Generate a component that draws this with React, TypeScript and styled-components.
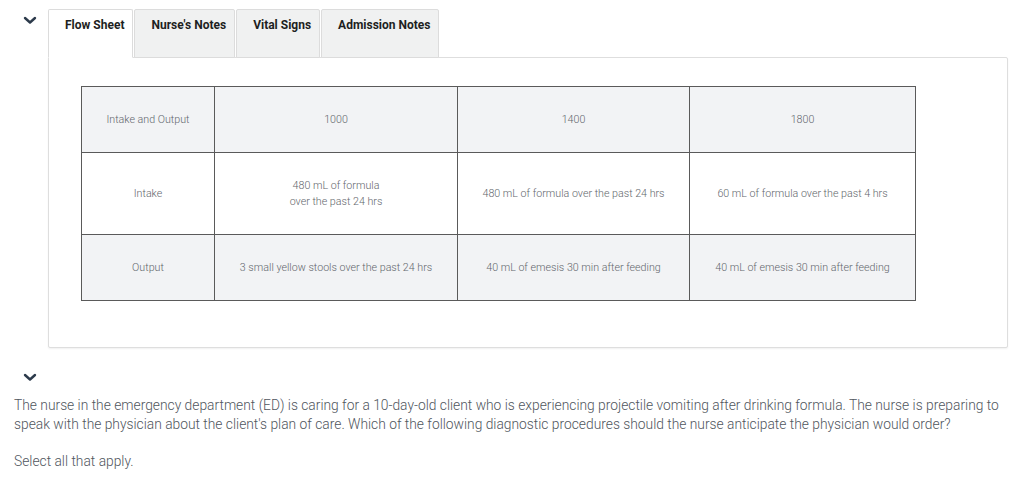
import styled, { createGlobalStyle } from "styled-components";

const GlobalStyle = createGlobalStyle`
  body {
    margin: 0;
    background: #ffffff;
    font-family: Roboto, "Liberation Sans", Arial, sans-serif;
  }
  * { box-sizing: border-box; }
`;

const tabs = ["Flow Sheet", "Nurse's Notes", "Vital Signs", "Admission Notes"];

const rows = [
  {
    shade: true,
    cells: ["Intake and Output", "1000", "1400", "1800"],
  },
  {
    shade: false,
    cells: [
      "Intake",
      "480 mL of formula\nover the past 24 hrs",
      "480 mL of formula over the past 24 hrs",
      "60 mL of formula over the past 4 hrs",
    ],
  },
  {
    shade: true,
    cells: [
      "Output",
      "3 small yellow stools over the past 24 hrs",
      "40 mL of emesis 30 min after feeding",
      "40 mL of emesis 30 min after feeding",
    ],
  },
];

const rowHeights = [66, 82, 66];
const colWidths = [133, 243, 232, 226];

const Chevron = () => (
  <svg width="14" height="9" viewBox="0 0 14 9">
    <polyline
      points="2,2 7,6.5 12,2"
      fill="none"
      stroke="#2c3a4b"
      strokeWidth="2.4"
      strokeLinecap="round"
      strokeLinejoin="round"
    />
  </svg>
);

export default function App() {
  return (
    <>
      <GlobalStyle />
      <Page>
        <Section>
          <Toggle>
            <Chevron />
          </Toggle>
          <TabsArea>
            <TabBar>
              {tabs.map((t, i) => (
                <Tab key={t} active={i === 0}>
                  {t}
                </Tab>
              ))}
            </TabBar>
            <Panel>
              <Table>
                <colgroup>
                  {colWidths.map((w, i) => (
                    <col key={i} style={{ width: w }} />
                  ))}
                </colgroup>
                <tbody>
                  {rows.map((r, ri) => (
                    <Row key={ri} shade={r.shade} style={{ height: rowHeights[ri] }}>
                      {r.cells.map((c, ci) => (
                        <Cell key={ci}>{c}</Cell>
                      ))}
                    </Row>
                  ))}
                </tbody>
              </Table>
            </Panel>
          </TabsArea>
        </Section>

        <SecondToggle>
          <Chevron />
        </SecondToggle>

        <Question>
          The nurse in the emergency department (ED) is caring for a 10-day-old client who is
          experiencing projectile vomiting after drinking formula. The nurse is preparing to speak
          with the physician about the client's plan of care. Which of the following diagnostic
          procedures should the nurse anticipate the physician would order?
        </Question>
        <Instruction>Select all that apply.</Instruction>
      </Page>
    </>
  );
}

const Page = styled.div`
  padding: 9px 14px 0 14px;
  width: 1024px;
`;

const Section = styled.div`
  display: flex;
  align-items: flex-start;
`;

const Toggle = styled.div`
  width: 34px;
  display: flex;
  justify-content: flex-start;
  padding: 7px 0 0 9px;
`;

const TabsArea = styled.div`
  display: flex;
  flex-direction: column;
  width: 960px;
`;

const TabBar = styled.div`
  display: flex;
  align-items: flex-end;
  margin-bottom: -1px;
  position: relative;
  z-index: 1;
`;

const Tab = styled.div<{ active: boolean }>`
  height: 49px;
  padding: 7px 8px 0 16px;
  margin-right: 1px;
  font-size: 12px;
  line-height: 16px;
  font-weight: 700;
  color: #1d1f22;
  background: ${(p) => (p.active ? "#ffffff" : "#f0f1f1")};
  border: 1px solid #dcdcdc;
  border-bottom: ${(p) => (p.active ? "1px solid #ffffff" : "1px solid #dcdcdc")};
  border-radius: 2px 2px 0 0;
`;

const Panel = styled.div`
  border: 1px solid #dedede;
  border-radius: 0 2px 2px 2px;
  box-shadow: 0 1px 2px rgba(0, 0, 0, 0.06);
  padding: 28px 0 46px 32px;
  background: #ffffff;
`;

const Table = styled.table`
  border-collapse: collapse;
  table-layout: fixed;
  width: 834px;
`;

const Row = styled.tr<{ shade: boolean }>`
  background: ${(p) => (p.shade ? "#f2f3f5" : "#ffffff")};
`;

const Cell = styled.td`
  border: 1px solid #5a5a5a;
  text-align: center;
  vertical-align: middle;
  font-size: 10.7px;
  line-height: 16px;
  font-weight: 300;
  color: #63676d;
  white-space: pre-line;
  padding: 0 8px;
`;

const SecondToggle = styled.div`
  padding: 19px 0 0 9px;
  height: 48px;
`;

const Question = styled.p`
  margin: 0;
  font-size: 13.8px;
  line-height: 19px;
  font-weight: 300;
  color: #50565d;
`;

const Instruction = styled.p`
  margin: 18px 0 0 0;
  font-size: 13.8px;
  line-height: 19px;
  font-weight: 300;
  color: #50565d;
`;
